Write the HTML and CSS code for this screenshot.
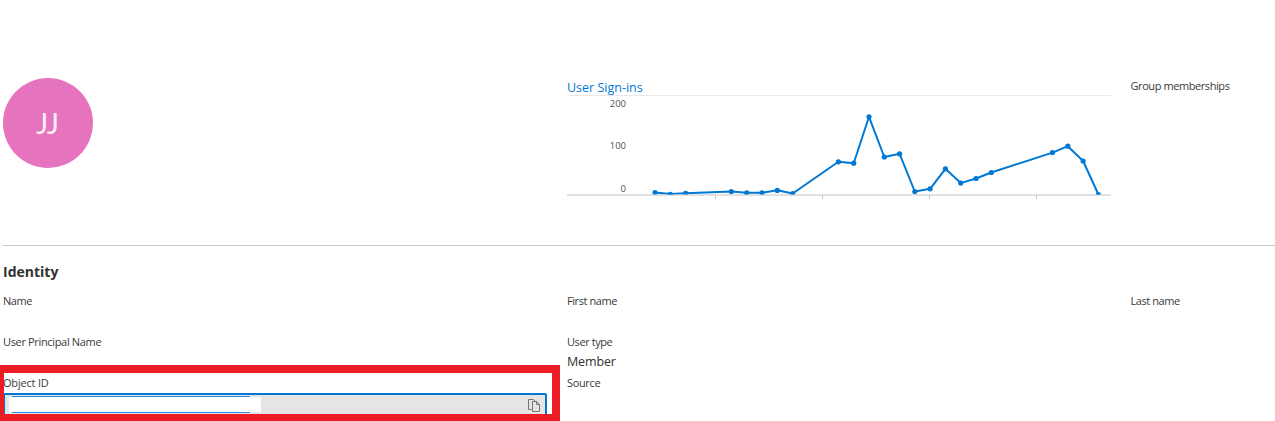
FILE: index.html
```html
<!DOCTYPE html>
<html lang="en">
<head>
<meta charset="utf-8">
<title>User profile</title>
<link rel="stylesheet" href="styles.css">
</head>
<body>
<main class="profile">
  <section class="overview">
    <div class="avatar"><span class="initials">JJ</span></div>
    <div class="signins">
      <a class="chart-title">User Sign-ins</a>
      <svg class="chart" width="544" height="106" viewBox="567 95 544 106">
        <defs><clipPath id="plot"><rect x="567" y="95" width="544" height="99.6"/></clipPath></defs>
        <rect class="grid-top" x="567" y="95" width="544" height="1"/>
        <rect class="axis" x="567" y="194" width="544" height="2"/>
        <g class="ticks">
          <rect x="715" y="195" width="1" height="4"/><rect x="822" y="195" width="1" height="4"/>
          <rect x="929" y="195" width="1" height="4"/><rect x="1036" y="195" width="1" height="4"/>
        </g>
        <g class="labels">
          <text x="626" y="107">200</text><text x="626" y="149">100</text><text x="626" y="192">0</text>
        </g>
        <g clip-path="url(#plot)">
          <polyline class="series" points="655,192.5 670.3,194 685.6,193.2 731.3,191.5 746.7,192.8 762,192.8 777.3,190.3 792.7,193.5 838.4,161.8 853.7,163.2 869,116.8 884.3,157 899.6,153.8 914.8,191.5 930.1,188.8 945.4,168.8 960.7,183.1 976,178.5 991.3,172.5 1052.5,152.6 1067.8,146.2 1083.1,161 1098.4,194.5"/>
          <g class="dots">
            <circle cx="655" cy="192.5" r="2.6"/><circle cx="670.3" cy="194.3" r="2.6"/><circle cx="685.6" cy="193.3" r="2.6"/>
            <circle cx="731.3" cy="191.5" r="2.6"/><circle cx="746.7" cy="192.9" r="2.6"/><circle cx="762" cy="192.9" r="2.6"/>
            <circle cx="777.3" cy="190.4" r="2.6"/><circle cx="792.7" cy="193.7" r="2.6"/><circle cx="838.4" cy="161.8" r="2.6"/>
            <circle cx="853.7" cy="163.2" r="2.6"/><circle cx="869" cy="116.8" r="2.6"/><circle cx="884.3" cy="157" r="2.6"/>
            <circle cx="899.6" cy="153.8" r="2.6"/><circle cx="914.8" cy="191.5" r="2.6"/><circle cx="930.1" cy="188.8" r="2.6"/>
            <circle cx="945.4" cy="168.8" r="2.6"/><circle cx="960.7" cy="183.1" r="2.6"/><circle cx="976" cy="178.5" r="2.6"/>
            <circle cx="991.3" cy="172.5" r="2.6"/><circle cx="1052.5" cy="152.6" r="2.6"/><circle cx="1067.8" cy="146.2" r="2.6"/>
            <circle cx="1083.1" cy="161" r="2.6"/><circle cx="1098.4" cy="194.5" r="2.6"/>
          </g>
        </g>
      </svg>
    </div>
    <div class="groups label">Group memberships</div>
  </section>
  <section class="identity">
    <h2 class="heading">Identity</h2>
    <div class="fields">
      <div class="label">Name</div>
      <div class="label">First name</div>
      <div class="label">Last name</div>
      <div class="label principal">User Principal Name</div>
      <div class="field"><div class="label">User type</div><div class="value">Member</div></div>
      <div></div>
      <div class="field object">
        <div class="label">Object ID</div>
        <div class="copy-field">
          <div class="selection"><div class="redacted"></div></div>
          <svg class="copy" width="12" height="13" viewBox="0 0 12 13">
            <path d="M3.5 10.5h-3v-10h5l2 2"/>
            <path d="M4.5 2.5h4l3 3v7h-7zM8.5 2.5v3h3"/>
          </svg>
        </div>
      </div>
      <div class="label source">Source</div>
    </div>
  </section>
  <div class="callout"></div>
</main>
</body>
</html>
```

FILE: styles.css
```css
* { box-sizing: border-box; }
body {
  margin: 0;
  background: #fff;
  color: #323130;
  font-family: "Open Sans", "Noto Sans", sans-serif;
}
.profile {
  position: relative;
  width: 1275px;
  height: 421px;
  padding: 78px 0 0 3px;
  overflow: hidden;
}
.overview {
  display: grid;
  grid-template-columns: 564px 563.5px 1fr;
  height: 168px;
  border-bottom: 1px solid #c8c8c8;
}
.avatar {
  display: flex;
  align-items: center;
  justify-content: center;
  width: 90px;
  height: 90px;
  padding-right: 2px;
  border-radius: 50%;
  background: #e673bd;
}
.initials {
  color: #fcecf6;
  font-family: Lato, "Open Sans", sans-serif;
  font-size: 29px;
  font-weight: 400;
  letter-spacing: -1px;
  line-height: 36px;
}
.chart-title {
  display: block;
  height: 17px;
  color: #0078d4;
  font-size: 12.5px;
  line-height: 20px;
  white-space: nowrap;
}
.chart { display: block; }
.grid-top { fill: #eaeaea; }
.axis { fill: #e1e1e1; }
.ticks { fill: #c8c8c8; }
.labels { fill: #555; font-size: 9.5px; text-anchor: end; }
.series { fill: none; stroke: #0078d4; stroke-width: 2; stroke-linejoin: round; }
.dots { fill: #0078d4; }
.label {
  color: #3b3a39;
  font-size: 11px;
  letter-spacing: -0.42px;
  line-height: 16px;
  white-space: nowrap;
}
.principal { letter-spacing: -0.34px; }
.source { letter-spacing: -0.35px; }
.heading {
  margin: 0;
  padding-top: 16px;
  height: 47px;
  font-size: 14px;
  font-weight: 700;
  line-height: 20px;
}
.fields {
  display: grid;
  grid-template-columns: 564px 563.5px 1fr;
  grid-auto-rows: 41px;
}
.value { font-size: 12.5px; letter-spacing: -0.15px; line-height: 24px; }
.object .label { position: relative; z-index: 2; letter-spacing: -0.2px; }
.copy-field {
  display: flex;
  align-items: flex-start;
  justify-content: space-between;
  width: 544px;
  height: 26px;
  margin-top: 2px;
  padding: 1px 5px 0 4px;
  border: 2px solid #0078d4;
  border-radius: 2px;
  background: #e5e5e5;
}
.selection {
  display: flex;
  width: 252px;
  height: 17px;
  padding: 1px 0;
  background: linear-gradient(#2b8cf0, #2b8cf0) 3px 0 / 238px 1px no-repeat,
    linear-gradient(#2b8cf0, #2b8cf0) 3px 16px / 238px 1px no-repeat;
}
.redacted { flex: 1; background: #fff; }
.copy { margin-top: 3px; fill: none; stroke: #777573; }
.callout {
  position: absolute;
  left: 0;
  top: 365px;
  z-index: 1;
  width: 560px;
  height: 56px;
  border: solid #ed1c24;
  border-width: 8px 8px 7px 4px;
}
```
